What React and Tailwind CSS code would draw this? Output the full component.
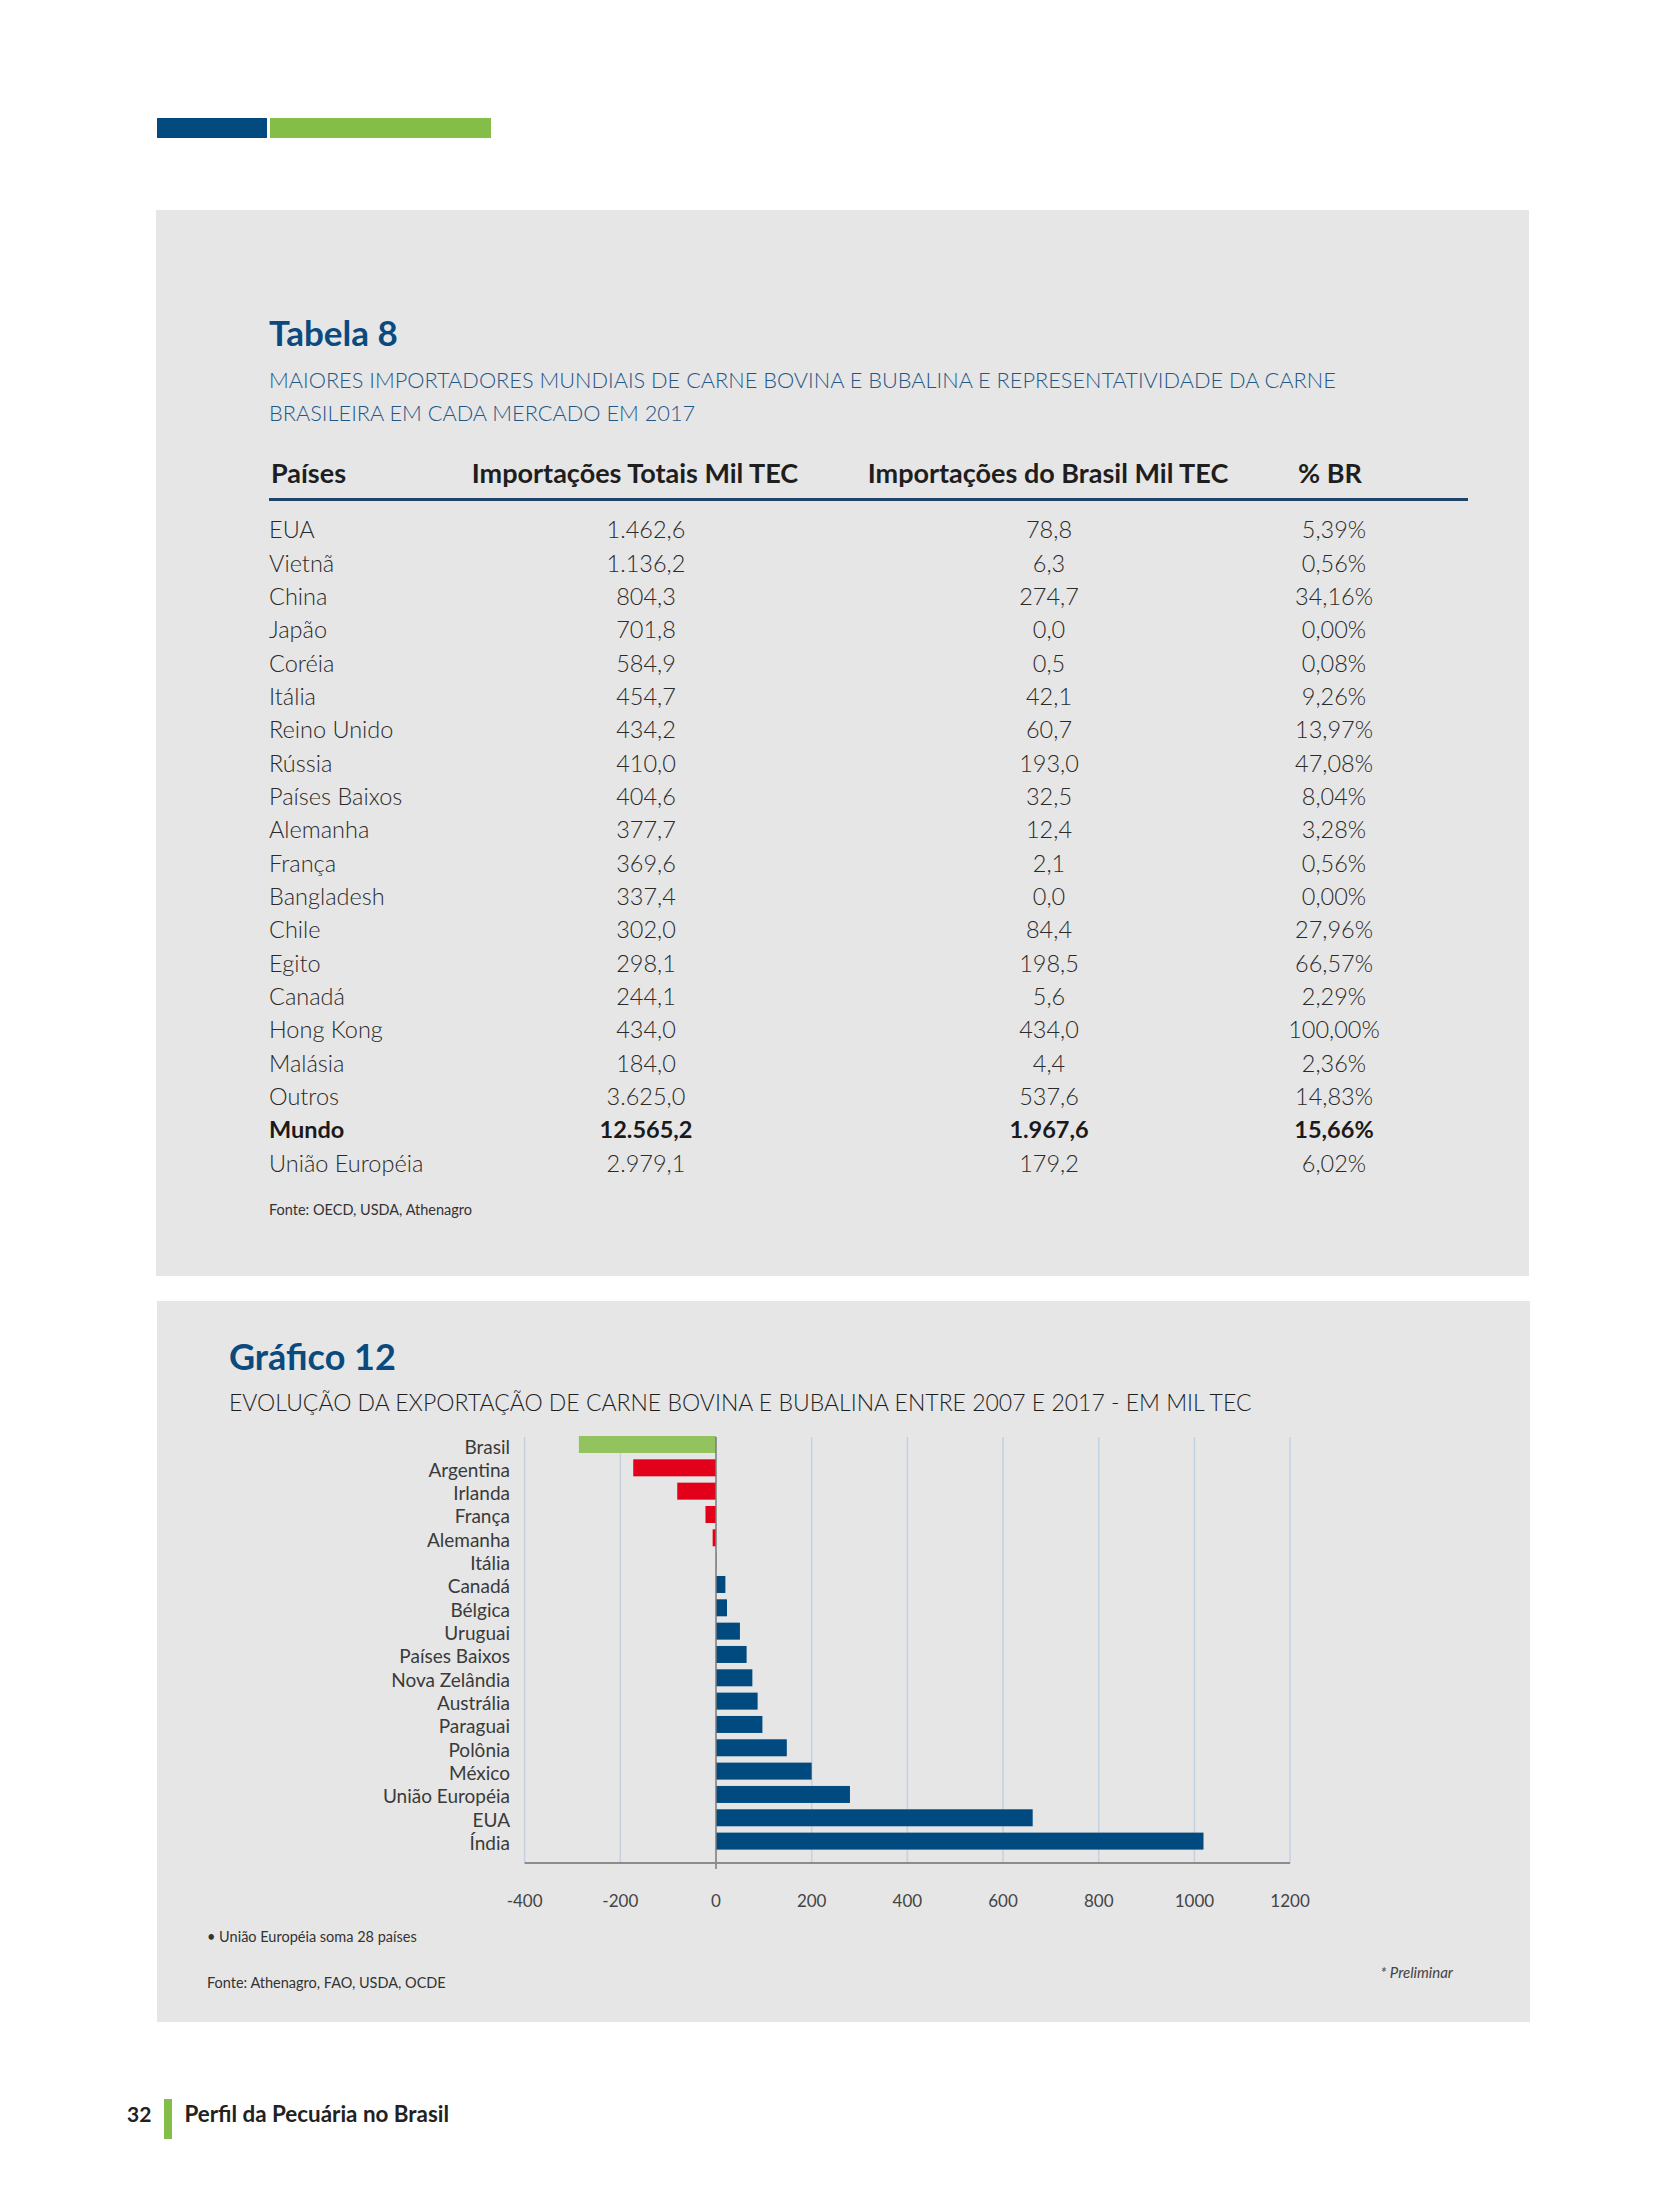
const rows = [
  ["EUA", "1.462,6", "78,8", "5,39%"],
  ["Vietnã", "1.136,2", "6,3", "0,56%"],
  ["China", "804,3", "274,7", "34,16%"],
  ["Japão", "701,8", "0,0", "0,00%"],
  ["Coréia", "584,9", "0,5", "0,08%"],
  ["Itália", "454,7", "42,1", "9,26%"],
  ["Reino Unido", "434,2", "60,7", "13,97%"],
  ["Rússia", "410,0", "193,0", "47,08%"],
  ["Países Baixos", "404,6", "32,5", "8,04%"],
  ["Alemanha", "377,7", "12,4", "3,28%"],
  ["França", "369,6", "2,1", "0,56%"],
  ["Bangladesh", "337,4", "0,0", "0,00%"],
  ["Chile", "302,0", "84,4", "27,96%"],
  ["Egito", "298,1", "198,5", "66,57%"],
  ["Canadá", "244,1", "5,6", "2,29%"],
  ["Hong Kong", "434,0", "434,0", "100,00%"],
  ["Malásia", "184,0", "4,4", "2,36%"],
  ["Outros", "3.625,0", "537,6", "14,83%"],
  ["Mundo", "12.565,2", "1.967,6", "15,66%", true],
  ["União Européia", "2.979,1", "179,2", "6,02%"],
];

const bars = [
  ["Brasil", -286.6, "#92c35f"],
  ["Argentina", -173, "#e2001a"],
  ["Irlanda", -81, "#e2001a"],
  ["França", -22, "#e2001a"],
  ["Alemanha", -7, "#e2001a"],
  ["Itália", 0.6, "#004a80"],
  ["Canadá", 19.6, "#004a80"],
  ["Bélgica", 23, "#004a80"],
  ["Uruguai", 50, "#004a80"],
  ["Países Baixos", 64, "#004a80"],
  ["Nova Zelândia", 76, "#004a80"],
  ["Austrália", 87, "#004a80"],
  ["Paraguai", 97, "#004a80"],
  ["Polônia", 148, "#004a80"],
  ["México", 200, "#004a80"],
  ["União Européia", 280, "#004a80"],
  ["EUA", 662, "#004a80"],
  ["Índia", 1019, "#004a80"],
];

const ZERO = 559;
const SC = 0.4784;
const gx = (v) => ZERO + v * SC;
const ticks = [-400, -200, 0, 200, 400, 600, 800, 1000, 1200];

function Chart() {
  return (
    <svg width="1373" height="500" viewBox="0 0 1373 500" className="block">
      {ticks.map((t) =>
        t === 0 ? null : (
          <line key={t} x1={gx(t)} x2={gx(t)} y1={20} y2={446} stroke="#c3d1e1" strokeWidth="1.5" />
        )
      )}
      {bars.map(([name, v, c], i) => {
        const y = 19 + i * 23.33;
        const x = v < 0 ? gx(v) : ZERO;
        const w = Math.abs(v) * SC;
        return (
          <g key={name}>
            <rect x={x} y={y} width={w} height={17} fill={c} />
            <text
              x={353}
              y={y + 10}
              textAnchor="end"
              dominantBaseline="central"
              fontFamily="Lato, sans-serif"
              fontSize="19"
              fill="#3a3a3a"
            >
              {name}
            </text>
          </g>
        );
      })}
      <line x1={ZERO} x2={ZERO} y1={20} y2={452} stroke="#7a7a7a" strokeWidth="1.5" />
      <line x1={gx(-400)} x2={gx(1200)} y1={446} y2={446} stroke="#8c8c8c" strokeWidth="2" />
      {ticks.map((t) => (
        <text
          key={t}
          x={gx(t)}
          y={483}
          textAnchor="middle"
          dominantBaseline="central"
          fontFamily="'Liberation Sans Narrow', Lato, sans-serif"
          fontSize="17"
          fill="#444"
        >
          {t}
        </text>
      ))}
    </svg>
  );
}

export default function App() {
  return (
    <div className="w-[1654px] h-[2205px] bg-white overflow-hidden [font-family:Lato,sans-serif]">
      <div className="flex pt-[118px] pl-[157px] gap-[3px]">
        <div className="w-[110px] h-[20px] bg-[#034a80]" />
        <div className="w-[221px] h-[20px] bg-[#84bd48]" />
      </div>

      <section className="mt-[72px] ml-[156px] w-[1373px] h-[1066px] bg-[#e6e6e6] pl-[113px] pt-[102px]">
        <h2 className="text-[35px] leading-[40px] font-bold text-[#0b4a7e]">Tabela 8</h2>
        <p className="mt-[11.5px] text-[21.75px] leading-[33px] font-light text-[#1f5789] whitespace-nowrap">
          MAIORES IMPORTADORES MUNDIAIS DE CARNE BOVINA E BUBALINA E REPRESENTATIVIDADE DA CARNE
          <br />
          BRASILEIRA EM CADA MERCADO EM 2017
        </p>
        <div className="mt-[26.5px] grid grid-cols-[190px_352px_474px_90px] h-[34px] leading-[34px] text-[27px] font-bold text-[#1e1e1e] whitespace-nowrap">
          <div className="pl-[2px]">Países</div>
          <div className="text-center">Importações Totais Mil TEC</div>
          <div className="text-center">Importações do Brasil Mil TEC</div>
          <div className="text-center">% BR</div>
        </div>
        <div className="mt-[8px] w-[1199px] h-[3px] bg-[#1f4468]" />
        <div className="mt-[12.3px]">
          {rows.map(([c, a, b, p, bold]) => (
            <div
              key={c}
              className={
                "grid grid-cols-[201px_352px_454px_116px] h-[33.33px] leading-[33.33px] text-[23.5px] whitespace-nowrap " +
                (bold ? "font-bold text-[#1a1a1a]" : "font-light text-[#2a2a2a]")
              }
            >
              <div>{c}</div>
              <div className="text-center">{a}</div>
              <div className="text-center">{b}</div>
              <div className="text-center">{p}</div>
            </div>
          ))}
        </div>
        <p className="mt-[20px] text-[14.5px] leading-[20px] text-[#333]">Fonte: OECD, USDA, Athenagro</p>
      </section>

      <section className="mt-[25px] ml-[157px] w-[1373px] h-[721px] bg-[#e6e6e6] pt-[35px]">
        <div className="pl-[72px]">
          <h2 className="text-[36px] leading-[40px] font-bold text-[#0b4a7e]">Gráfico 12</h2>
          <p className="mt-[11px] text-[23px] leading-[30px] font-light text-[#1e1e1e] whitespace-nowrap">
            EVOLUÇÃO DA EXPORTAÇÃO DE CARNE BOVINA E BUBALINA ENTRE 2007 E 2017 - EM MIL TEC
          </p>
        </div>
        <Chart />
        <div className="mt-[10px] flex items-start pl-[50px] pr-[77px]">
          <div className="text-[14.5px] leading-[20px] text-[#333]">
            <p>• União Européia soma 28 países</p>
            <p className="mt-[26px]">Fonte: Athenagro, FAO, USDA, OCDE</p>
          </div>
          <p className="ml-auto mt-[35px] text-[15px] leading-[20px] italic text-[#444]">* Preliminar</p>
        </div>
      </section>

      <footer className="mt-[77px] pl-[127px] flex items-start">
        <span className="text-[21px] leading-[30px] font-bold text-[#222]">32</span>
        <span className="ml-[13px] w-[8px] h-[40px] bg-[#84bd48]" />
        <span className="ml-[12px] text-[22.4px] leading-[30px] font-bold text-[#222]">Perfil da Pecuária no Brasil</span>
      </footer>
    </div>
  );
}
